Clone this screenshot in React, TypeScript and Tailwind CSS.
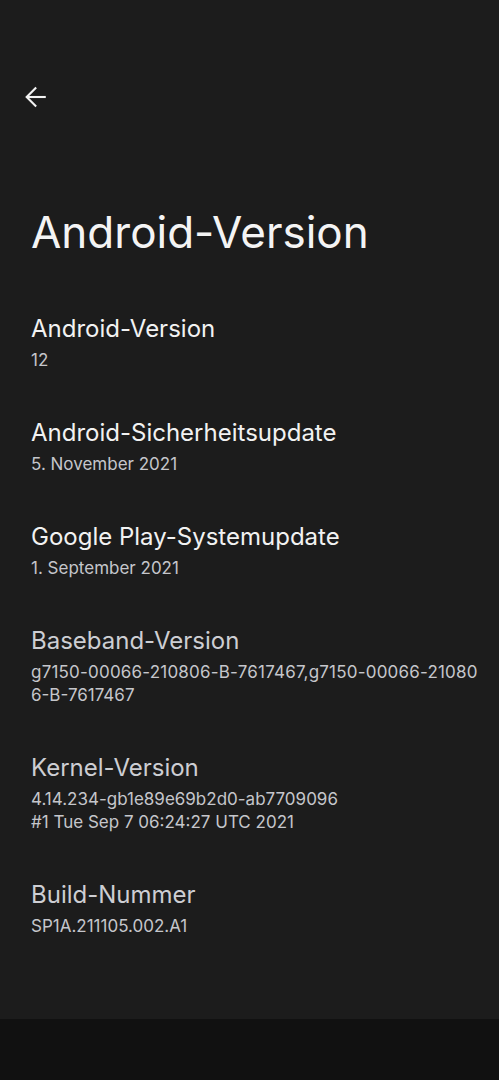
import React from "react";

const items: { title: string; lines: string[]; dim?: boolean }[] = [
  { title: "Android-Version", lines: ["12"] },
  { title: "Android-Sicherheitsupdate", lines: ["5. November 2021"] },
  { title: "Google Play-Systemupdate", lines: ["1. September 2021"] },
  { title: "Baseband-Version", lines: ["g7150-00066-210806-B-7617467,g7150-00066-21080", "6-B-7617467"], dim: true },
  { title: "Kernel-Version", lines: ["4.14.234-gb1e89e69b2d0-ab7709096", "#1 Tue Sep 7 06:24:27 UTC 2021"], dim: true },
  { title: "Build-Nummer", lines: ["SP1A.211105.002.A1"], dim: true },
];

export default function App() {
  return (
    <div className="w-[499px] h-[1080px] bg-[#1c1c1c] flex flex-col" style={{ fontFamily: "Inter, 'Open Sans', sans-serif" }}>
      <div className="flex-1 flex flex-col">
        <div className="h-[83px]" />
        <div className="pl-[22px] h-[28px] flex items-center">
          <svg width="28" height="28" viewBox="0 0 24 24" fill="none" stroke="#f2f2f2" strokeWidth="1.8" strokeLinecap="square" strokeLinejoin="miter">
            <path d="M19.5 12H5" />
            <path d="M11.5 4.5L4 12l7.5 7.5" />
          </svg>
        </div>
        <div className="pl-[31px] mt-[93px] text-[44px] leading-[56px] text-[#f4f4f4]">Android-Version</div>
        <div className="mt-[53px] flex flex-col gap-[45px]">
          {items.map((it) => (
            <div key={it.title} className="pl-[31px] pr-[10px]">
              <div className={`text-[24px] leading-[32px] ${it.dim ? "text-[#cdced3]" : "text-[#f2f2f2]"}`}>{it.title}</div>
              <div className="text-[17px] leading-[23px] text-[#c5c6cb] mt-[4px] whitespace-nowrap">
                {it.lines.map((l) => (
                  <div key={l} className={l.length > 40 ? "tracking-[0.2px]" : ""}>{l}</div>
                ))}
              </div>
            </div>
          ))}
        </div>
      </div>
      <div className="h-[61px] bg-[#111111]" />
    </div>
  );
}
